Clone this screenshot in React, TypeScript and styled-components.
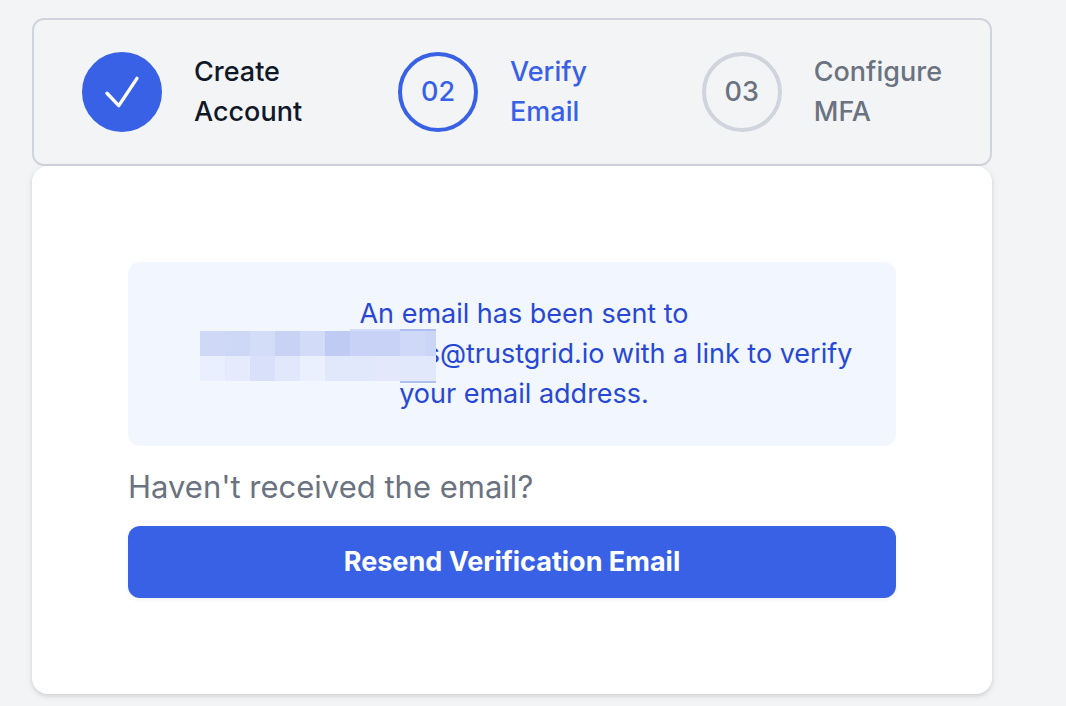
import React from "react";
import styled, { createGlobalStyle } from "styled-components";

const GlobalStyle = createGlobalStyle`
  *, *::before, *::after { box-sizing: border-box; }
  body {
    margin: 0;
    background: #f3f4f6;
    font-family: Inter, "Liberation Sans", sans-serif;
    font-size: 27px;
    line-height: 40px;
    -webkit-font-smoothing: antialiased;
  }
`;

const Page = styled.main`
  padding: 18px 74px 12px 32px;
`;

const Steps = styled.ol`
  display: flex;
  margin: 0;
  padding: 0;
  list-style: none;
  border: 2px solid #d2d4dd;
  border-radius: 12px;
`;

type StepState = "done" | "current" | "upcoming";

const ringColor = { done: "#3861e6", current: "#3861e6", upcoming: "#d2d4dd" };
const labelColor = { done: "#111827", current: "#3861e6", upcoming: "#6b7280" };

const Step = styled.li<{ $state: StepState }>`
  flex: 1;
  display: flex;
  align-items: center;
  gap: 32px;
  padding: 32px 48px;
  color: ${(p) => labelColor[p.$state]};
  font-weight: 500;
`;

const StepMark = styled.span<{ $state: StepState }>`
  flex: none;
  display: flex;
  align-items: center;
  justify-content: center;
  width: 80px;
  height: 80px;
  border: 4px solid ${(p) => ringColor[p.$state]};
  border-radius: 50%;
  background: ${(p) => (p.$state === "done" ? ringColor.done : "transparent")};
`;

const Card = styled.section`
  padding: 96px;
  background: #fff;
  border-radius: 16px;
  box-shadow: 0 2px 6px rgba(0, 0, 0, 0.1), 0 2px 4px rgba(0, 0, 0, 0.06);
`;

const Notice = styled.div`
  padding: 32px 32px 32px 56px;
  background: #f1f6ff;
  border-radius: 12px;
  color: #2848d4;
  text-align: center;
`;

const NoticeText = styled.p`
  margin: 0;
`;

const Redacted = styled.span`
  position: relative;
  display: inline-block;
  width: 230px;
  height: 40px;
  vertical-align: top;
`;

const Mosaic = styled.svg`
  position: absolute;
  top: -5px;
  left: 4px;
`;

const Hint = styled.p`
  margin: 17px 0 15px;
  color: #6b7280;
  font-size: 31px;
  line-height: 48px;
`;

const ResendButton = styled.button`
  display: block;
  width: 100%;
  padding: 16px 32px;
  border: 0;
  border-radius: 12px;
  background: #3861e6;
  box-shadow: 0 2px 4px rgba(0, 0, 0, 0.05);
  color: #fff;
  font: inherit;
  font-weight: 700;
  cursor: pointer;
`;

const upperTiles = ["#cfd8f6", "#cdd7f6", "#d3ddf8", "#c8d2f5", "#d2dbf8", "#bfcbf2", "#c8d2f6", "#c8d2f6", "#cfd8f6", "#cbd5f5"];
const lowerTiles = ["#e9effe", "#e5ebfc", "#d8e0fa", "#e2e8fb", "#eaf0fe", "#e2e8fb", "#e2e8fb", "#e3e9fb", "#e2e8fb", "#e2e8fb"];

function HiddenName() {
  return (
    <Redacted>
      <Mosaic width="236" height="54" viewBox="0 0 236 54" shapeRendering="crispEdges" aria-hidden="true">
        <path d="M150 0h50v2h-50z" fill="#d3ddf8" />
        <path d="M200 0h36v2h-36zM200 52h36v2h-36z" fill="#b0bff0" />
        {upperTiles.map((fill, i) => (
          <rect key={i} x={i * 25} y="2" width="25" height="25" fill={fill} />
        ))}
        {lowerTiles.map((fill, i) => (
          <rect key={i} x={i * 25} y="27" width="25" height="25" fill={fill} />
        ))}
      </Mosaic>
    </Redacted>
  );
}

function Check() {
  return (
    <svg width="48" height="48" viewBox="0 0 48 48" fill="none" aria-hidden="true">
      <path d="M9 25.3 20.8 37.6 39 10.4" stroke="#fff" strokeWidth="3.4" strokeLinecap="round" strokeLinejoin="round" />
    </svg>
  );
}

const steps: { id: string; label: string; state: StepState }[] = [
  { id: "01", label: "Create Account", state: "done" },
  { id: "02", label: "Verify Email", state: "current" },
  { id: "03", label: "Configure MFA", state: "upcoming" },
];

export default function App() {
  return (
    <>
      <GlobalStyle />
      <Page>
        <Steps>
          {steps.map((s) => (
            <Step key={s.id} $state={s.state} aria-current={s.state === "current" ? "step" : undefined}>
              <StepMark $state={s.state}>{s.state === "done" ? <Check /> : s.id}</StepMark>
              <span>{s.label}</span>
            </Step>
          ))}
        </Steps>
        <Card>
          <Notice role="status">
            <NoticeText>
              An email has been sent to
              <br />
              <HiddenName />
              s@trustgrid.io with a link to verify your email address.
            </NoticeText>
          </Notice>
          <Hint>Haven't received the email?</Hint>
          <ResendButton type="button">Resend Verification Email</ResendButton>
        </Card>
      </Page>
    </>
  );
}
